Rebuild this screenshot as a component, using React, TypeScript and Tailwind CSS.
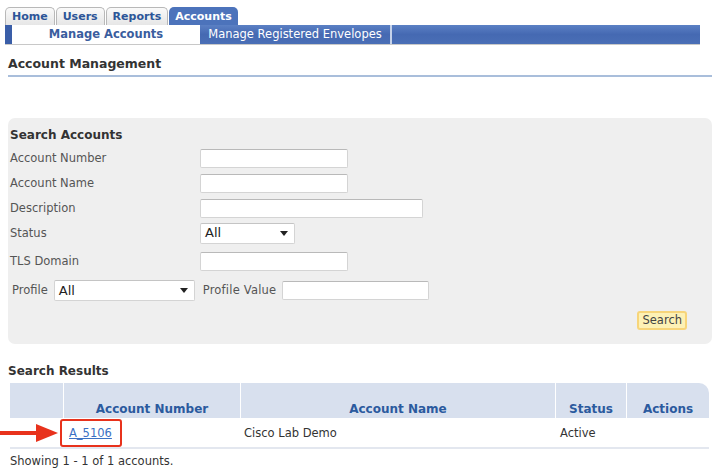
import React from "react";

const FONT = { fontFamily: '"DejaVu Sans", Verdana, sans-serif' };

const TABS = ["Home", "Users", "Reports"];

function TextBox({ w }: { w: string }) {
  return (
    <div
      className={`${w} h-[19px] bg-white border border-[#d4d4d4] border-t-[#b9b9b9] rounded-[2px]`}
    />
  );
}

function Select({ w, h = "h-[21px]" }: { w: string; h?: string }) {
  return (
    <div
      className={`${w} ${h} bg-white border border-[#d4d4d4] border-t-[#c4c4c4] rounded-[2px] flex items-center justify-between pl-[4px] pr-[6px]`}
    >
      <span className="text-[13px] text-[#222]">All</span>
      <svg width="8" height="5" viewBox="0 0 8 5">
        <path d="M0 0h8L4 5z" fill="#222" />
      </svg>
    </div>
  );
}

function FieldRow({ label, children, mt }: { label: string; children: React.ReactNode; mt: string }) {
  return (
    <div className={`flex items-center h-[20px] ${mt}`}>
      <div className="w-[190px] text-[11.5px] text-[#555] pt-[2px]">{label}</div>
      {children}
    </div>
  );
}

export default function App() {
  return (
    <div className="w-[720px] h-[472px] bg-white overflow-hidden relative" style={FONT}>
      {/* top tabs */}
      <div className="flex items-end pl-[5px] pt-[7px] h-[25px] gap-[1px]">
        {TABS.map((t) => (
          <div
            key={t}
            className="h-[18px] px-[6px] pt-[2px] flex items-center rounded-t-[5px] border border-b-0 border-[#b8b8b8] bg-gradient-to-b from-[#fafafa] to-[#e6e6e6] text-[11px] font-bold text-[#2c5598]"
          >
            {t}
          </div>
        ))}
        <div className="h-[18px] px-[6px] pt-[2px] flex items-center rounded-t-[5px] bg-[#4c73bb] text-[11px] font-bold text-white">
          Accounts
        </div>
      </div>

      {/* sub nav */}
      <div className="ml-[5px] w-[695px] h-[20px] flex bg-gradient-to-b from-[#5b80c4] via-[#4569b2] to-[#4a6fb6] border-b border-[#c8c8c8]">
        <div className="w-[7px] bg-[#3a5ea8]" />
        <div className="w-[188px] bg-white text-[11.5px] font-bold text-[#3a5d9e] flex items-center justify-center">
          Manage Accounts
        </div>
        <div className="w-[192px] text-[11.5px] text-white flex items-center justify-center border-r-2 border-[#c5d2ea]">
          Manage Registered Envelopes
        </div>
      </div>

      {/* page heading */}
      <div className="mx-[8px] mt-[11px] pb-[3px] border-b-2 border-[#a9bedb]">
        <div className="text-[12.5px] font-bold text-[#333] leading-[16px]">Account Management</div>
      </div>

      {/* search panel */}
      <div className="mx-[8px] mt-[41px] h-[226px] bg-[#efefef] rounded-[7px] pt-[9px] pl-[2px] pr-[24px] flex flex-col">
        <div className="text-[12px] font-bold text-[#333] leading-[16px]">Search Accounts</div>
        <FieldRow label="Account Number" mt="mt-[5px]">
          <TextBox w="w-[148px]" />
        </FieldRow>
        <FieldRow label="Account Name" mt="mt-[5px]">
          <TextBox w="w-[148px]" />
        </FieldRow>
        <FieldRow label="Description" mt="mt-[5px]">
          <TextBox w="w-[223px]" />
        </FieldRow>
        <FieldRow label="Status" mt="mt-[5px]">
          <Select w="w-[95px]" />
        </FieldRow>
        <FieldRow label="TLS Domain" mt="mt-[8px]">
          <TextBox w="w-[148px]" />
        </FieldRow>
        <div className="flex items-center h-[21px] mt-[9px] pl-[2px]">
          <span className="text-[11.5px] text-[#555] mr-[6px]">Profile</span>
          <Select w="w-[141px]" />
          <span className="text-[11.5px] text-[#555] ml-[8px] mr-[6px] tracking-[0.2px]">Profile Value</span>
          <TextBox w="w-[147px]" />
        </div>
        <div className="flex justify-end mt-[10px] pr-[1px]">
          <div className="h-[19px] px-[3px] flex items-center bg-[#fdf1b5] border-2 border-[#f7d57a] rounded-[3px] text-[11.5px] text-[#444]">
            Search
          </div>
        </div>
      </div>

      {/* results */}
      <div className="mx-[8px] mt-[19px] text-[12px] font-bold text-[#333] leading-[16px]">Search Results</div>
      <div className="ml-[10px] w-[699px] mt-[4px]">
        <div className="grid grid-cols-[53px_176px_314px_70px_1fr] gap-x-[1px] h-[35px] rounded-tr-[10px] overflow-hidden">
          <div className="bg-[#d8e0ee]" />
          {["Account Number", "Account Name", "Status", "Actions"].map((h) => (
            <div
              key={h}
              className="bg-[#d8e0ee] flex items-end justify-center pb-0 text-[12px] font-bold text-[#2b5a9e]"
            >
              {h}
            </div>
          ))}
        </div>
        <div className="grid grid-cols-[53px_176px_314px_70px_1fr] gap-x-[1px] h-[31px] items-center border-b-2 border-[#e3e7ef] text-[11.5px] text-[#333]">
          <div />
          <a href="#" className="pl-[5px] pt-[2px] text-[#3b71c4] underline">
            A_5106
          </a>
          <div className="pl-[3px] pt-[2px]">Cisco Lab Demo</div>
          <div className="pl-[4px] pt-[2px]">Active</div>
          <div />
        </div>
      </div>
      <div className="ml-[10px] mt-[4px] text-[11.5px] text-[#333]">Showing 1 - 1 of 1 accounts.</div>

      {/* annotation overlay */}
      <div className="absolute left-[60px] top-[419px] w-[62px] h-[28px] border-[2.5px] border-[#e8321c] rounded-[3px]" />
      <svg className="absolute left-0 top-[423px]" width="59" height="20" viewBox="0 0 59 20">
        <rect x="0" y="8" width="38" height="4" fill="#e8321c" />
        <path d="M36 1 L58 10 L36 19 Z" fill="#e8321c" />
      </svg>
    </div>
  );
}
